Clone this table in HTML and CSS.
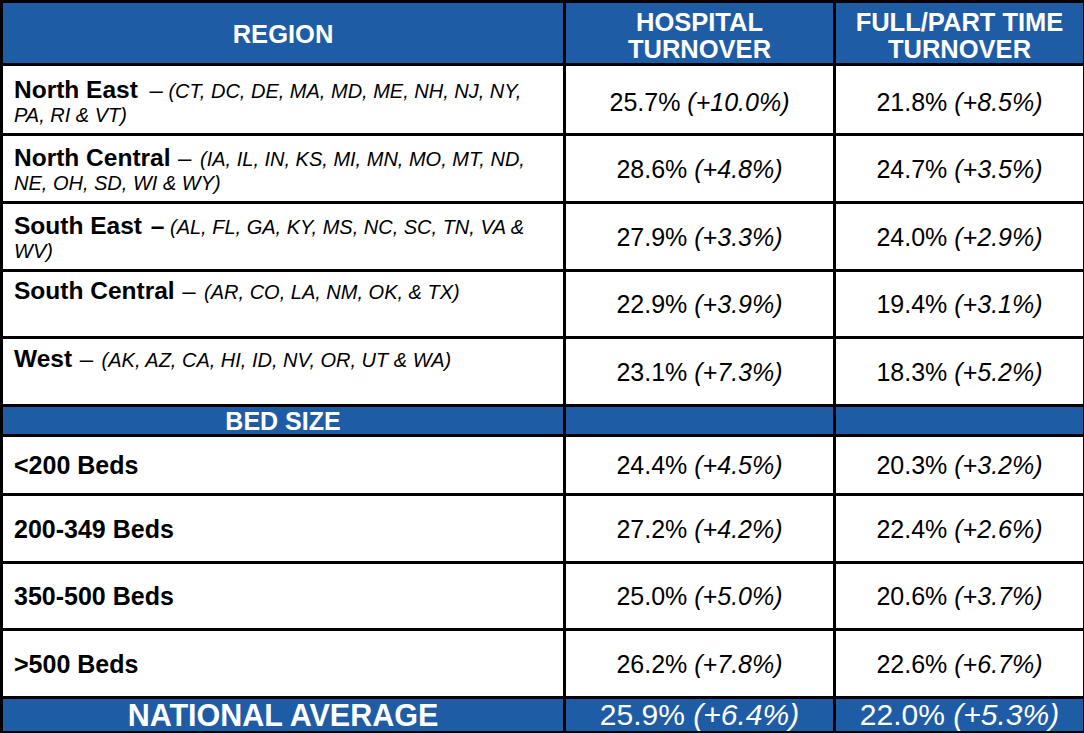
FILE: index.html
```html
<!DOCTYPE html>
<html lang="en">
<head>
<meta charset="utf-8">
<title>Turnover by Region and Bed Size</title>
<link rel="stylesheet" href="styles.css">
</head>
<body>
<table class="turnover">
  <colgroup>
    <col class="c-region">
    <col class="c-hosp">
    <col class="c-fpt">
  </colgroup>
  <thead>
    <tr class="head">
      <th class="head-single">REGION</th>
      <th>HOSPITAL<br>TURNOVER</th>
      <th>FULL/PART TIME<br>TURNOVER</th>
    </tr>
  </thead>
  <tbody>
    <tr class="row-region h70 first">
      <th class="label"><div class="region"><span class="name">North East</span> <span class="dash dash-wide">–</span> <span class="states">(CT, DC, DE, MA, MD, ME, NH, NJ, NY,<br>PA, RI &amp; VT)</span></div></th>
      <td class="val">25.7% <i>(+10.0%)</i></td>
      <td class="val">21.8% <i>(+8.5%)</i></td>
    </tr>
    <tr class="row-region h68">
      <th class="label"><div class="region"><span class="name">North Central</span> <span class="dash">–</span> <span class="states">(IA, IL, IN, KS, MI, MN, MO, MT, ND,<br>NE, OH, SD, WI &amp; WY)</span></div></th>
      <td class="val">28.6% <i>(+4.8%)</i></td>
      <td class="val">24.7% <i>(+3.5%)</i></td>
    </tr>
    <tr class="row-region h68">
      <th class="label"><div class="region"><span class="name">South East <span class="dash dash-bold">–</span></span> <span class="states">(AL, FL, GA, KY, MS, NC, SC, TN, VA &amp;<br>WV)</span></div></th>
      <td class="val">27.9% <i>(+3.3%)</i></td>
      <td class="val">24.0% <i>(+2.9%)</i></td>
    </tr>
    <tr class="row-region h67">
      <th class="label single"><div class="region"><span class="name">South Central</span> <span class="dash">–</span> <span class="states">(AR, CO, LA, NM, OK, &amp; TX)</span></div></th>
      <td class="val">22.9% <i>(+3.9%)</i></td>
      <td class="val">19.4% <i>(+3.1%)</i></td>
    </tr>
    <tr class="row-region h68">
      <th class="label single"><div class="region"><span class="name">West</span> <span class="dash">–</span> <span class="states">(AK, AZ, CA, HI, ID, NV, OR, UT &amp; WA)</span></div></th>
      <td class="val">23.1% <i>(+7.3%)</i></td>
      <td class="val">18.3% <i>(+5.2%)</i></td>
    </tr>
    <tr class="section">
      <th>BED SIZE</th>
      <td></td>
      <td></td>
    </tr>
    <tr class="row-beds h59">
      <th class="label"><span class="beds">&lt;200 Beds</span></th>
      <td class="val">24.4% <i>(+4.5%)</i></td>
      <td class="val">20.3% <i>(+3.2%)</i></td>
    </tr>
    <tr class="row-beds h68">
      <th class="label"><span class="beds">200-349 Beds</span></th>
      <td class="val">27.2% <i>(+4.2%)</i></td>
      <td class="val">22.4% <i>(+2.6%)</i></td>
    </tr>
    <tr class="row-beds h67">
      <th class="label"><span class="beds">350-500 Beds</span></th>
      <td class="val">25.0% <i>(+5.0%)</i></td>
      <td class="val">20.6% <i>(+3.7%)</i></td>
    </tr>
    <tr class="row-beds h68">
      <th class="label"><span class="beds">&gt;500 Beds</span></th>
      <td class="val">26.2% <i>(+7.8%)</i></td>
      <td class="val">22.6% <i>(+6.7%)</i></td>
    </tr>
    <tr class="total">
      <th>NATIONAL AVERAGE</th>
      <td>25.9% <i>(+6.4%)</i></td>
      <td>22.0% <i>(+5.3%)</i></td>
    </tr>
  </tbody>
</table>
</body>
</html>
```
FILE: styles.css
```css
html, body {
  margin: 0;
  padding: 0;
  background: #ffffff;
}

body {
  font-family: "Liberation Sans", Arial, sans-serif;
  color: #000000;
}

.turnover {
  border-collapse: collapse;
  table-layout: fixed;
  width: 1083px;
}

.turnover col.c-region { width: 563px; }
.turnover col.c-hosp { width: 270px; }
.turnover col.c-fpt { width: 250px; }

.turnover th,
.turnover td {
  border: 3px solid #000000;
  padding: 0;
}

/* Header */
.turnover .head {
  height: 63px;
}

.turnover .head th {
  background: #1f5ca6;
  color: #ffffff;
  font-size: 25.5px;
  font-weight: 700;
  line-height: 27px;
  text-align: center;
  vertical-align: middle;
  padding-top: 6px;
}

.turnover .head .head-single {
  padding-top: 2px;
}

/* Row heights */
.turnover .h70 { height: 70px; }
.turnover .h68 { height: 68px; }
.turnover .h67 { height: 67px; }
.turnover .h59 { height: 59px; }

/* Label cells */
.turnover .label {
  text-align: left;
  vertical-align: middle;
  padding: 3px 8px 0 11px;
  font-weight: 400;
}

.turnover .first .label {
  padding-top: 5px;
}

.turnover .label.single {
  padding-top: 0;
  padding-bottom: 2px;
}

.region {
  min-height: 48px;
  font-size: 20px;
  line-height: 24px;
}

.name {
  font-size: 24.5px;
  font-weight: 700;
}

.dash {
  font-size: 24px;
  font-weight: 400;
  margin: 0 3px 0 2px;
}

.dash-wide {
  margin: 0 0 0 6px;
}

.dash-bold {
  font-size: 24.5px;
  font-weight: 700;
  margin: 0 0 0 2px;
}

.states {
  font-size: 20px;
  font-style: italic;
  font-weight: 400;
}

.beds {
  font-size: 25px;
  font-weight: 700;
  line-height: 28px;
}

.turnover .row-beds .label {
  padding-top: 0;
}

/* Value cells */
.turnover .val {
  text-align: center;
  vertical-align: middle;
  font-size: 25px;
  line-height: 28px;
}

.turnover .first .val {
  padding-top: 4px;
}

.turnover i {
  font-style: italic;
}

/* Section divider */
.turnover .section {
  height: 30px;
}

.turnover .section th,
.turnover .section td {
  background: #1f5ca6;
  color: #ffffff;
  font-size: 25px;
  font-weight: 700;
  line-height: 26px;
  text-align: center;
  vertical-align: middle;
}

/* National average */
.turnover .total {
  height: 35px;
}

.turnover .total th,
.turnover .total td {
  background: #1f5ca6;
  color: #ffffff;
  line-height: 30px;
  text-align: center;
  vertical-align: middle;
}

.turnover .total th {
  font-size: 30.5px;
  font-weight: 700;
}

.turnover .total td {
  font-size: 30px;
  font-weight: 400;
}
```
